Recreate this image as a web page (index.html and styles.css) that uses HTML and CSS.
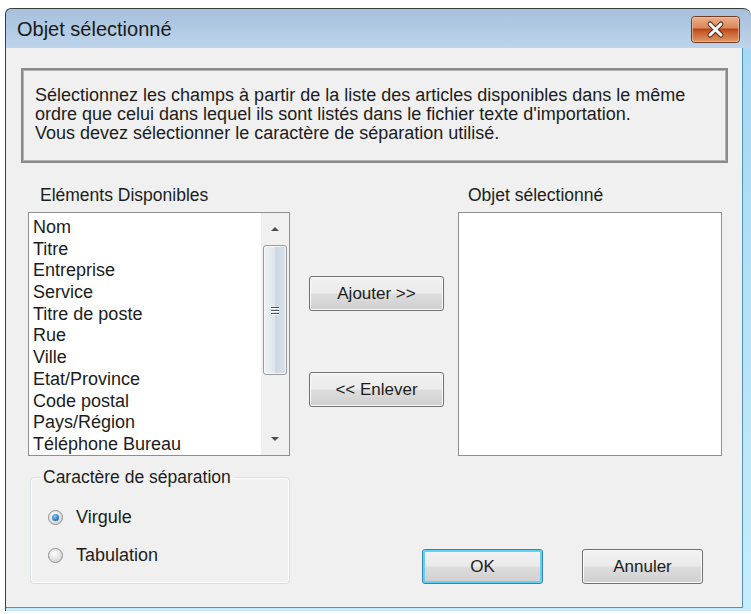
FILE: index.html
```html
<!DOCTYPE html>
<html lang="fr">
<head>
    <meta charset="UTF-8">
    <title>Objet sélectionné</title>
    <link rel="stylesheet" href="styles.css">
</head>
<body>
    <div class="window">
        <div class="titlebar">
            <span class="title">Objet sélectionné</span>
            <button class="close-btn" aria-label="Fermer">
                <svg width="49" height="27" viewBox="0 0 49 27">
                    <defs>
                        <linearGradient id="closeGrad" x1="0" y1="0" x2="0" y2="1">
                            <stop offset="0" stop-color="#eab08e"/>
                            <stop offset="0.42" stop-color="#dc8a5c"/>
                            <stop offset="0.5" stop-color="#b9461c"/>
                            <stop offset="0.62" stop-color="#c9622f"/>
                            <stop offset="1" stop-color="#e09a6a"/>
                        </linearGradient>
                    </defs>
                    <rect x="0.5" y="0.5" width="48" height="26" rx="3" fill="url(#closeGrad)" stroke="#6e3a26"/>
                    <rect x="1.5" y="1.5" width="46" height="24" rx="2" fill="none" stroke="#f4c9ad" stroke-opacity="0.6"/>
                    <path d="M19 8 L30 19 M30 8 L19 19" stroke="#5a2a18" stroke-width="5" stroke-linecap="round"/>
                    <path d="M19 8 L30 19 M30 8 L19 19" stroke="#ffffff" stroke-width="3" stroke-linecap="round"/>
                </svg>
            </button>
        </div>
        <div class="content">
            <div class="info-box">
                <p>Sélectionnez les champs à partir de la liste des articles disponibles dans le même<br>
                ordre que celui dans lequel ils sont listés dans le fichier texte d'importation.<br>
                Vous devez sélectionner le caractère de séparation utilisé.</p>
            </div>

            <div class="lists-row">
                <div class="list-col left-col">
                    <div class="list-label">Eléments Disponibles</div>
                    <div class="listbox">
                        <ul class="items">
                            <li>Nom</li>
                            <li>Titre</li>
                            <li>Entreprise</li>
                            <li>Service</li>
                            <li>Titre de poste</li>
                            <li>Rue</li>
                            <li>Ville</li>
                            <li>Etat/Province</li>
                            <li>Code postal</li>
                            <li>Pays/Région</li>
                            <li>Téléphone Bureau</li>
                        </ul>
                        <div class="scrollbar">
                            <div class="arrow arrow-up"></div>
                            <div class="thumb">
                                <span class="grip"></span>
                                <span class="grip"></span>
                                <span class="grip"></span>
                            </div>
                            <div class="track"></div>
                            <div class="arrow arrow-down"></div>
                        </div>
                    </div>
                </div>

                <div class="move-buttons">
                    <button class="btn move-btn">Ajouter &gt;&gt;</button>
                    <button class="btn move-btn">&lt;&lt; Enlever</button>
                </div>

                <div class="list-col right-col">
                    <div class="list-label">Objet sélectionné</div>
                    <div class="listbox"></div>
                </div>
            </div>

            <div class="bottom-row">
                <fieldset class="group">
                    <legend>Caractère de séparation</legend>
                    <label class="radio-row"><span class="radio checked"></span>Virgule</label>
                    <label class="radio-row"><span class="radio"></span>Tabulation</label>
                </fieldset>
                <div class="dialog-buttons">
                    <button class="btn dialog-btn default">OK</button>
                    <button class="btn dialog-btn">Annuler</button>
                </div>
            </div>
        </div>
    </div>
</body>
</html>
```

FILE: styles.css
```css
body {
    margin: 0;
    background: #ffffff;
    font-family: "Liberation Sans", Arial, sans-serif;
    font-size: 17.5px;
    color: #1c1c1c;
}
.window {
    margin: 8px 0 0 5px;
    width: 746px;
    height: 603px;
    box-sizing: border-box;
    border-top: 1px solid #3e3e3e;
    border-left: 1px solid #3e3e3e;
    border-top-left-radius: 6px;
    border-top-right-radius: 8px;
    background: linear-gradient(#a6c1dd, #bdd4eb 39px, #a6d8f0 40px, #c8ecf9);
    overflow: hidden;
}
.titlebar {
    height: 39px;
    display: flex;
    align-items: center;
    justify-content: space-between;
    padding: 1px 11px 0 11px;
    box-sizing: border-box;
}
.title {
    font-size: 20px;
    line-height: 24px;
    color: #1a1a1a;
}
.close-btn {
    padding: 0;
    border: none;
    background: none;
    width: 49px;
    height: 27px;
    display: block;
}
.close-btn svg {
    display: block;
}
.content {
    width: 737px;
    height: 560px;
    box-sizing: border-box;
    background: #f0f0f0;
    border-right: 1px solid #4f93c4;
    border-bottom: 1px solid #4f93c4;
    padding: 20px 14px 0 15px;
}
.info-box {
    height: 95px;
    box-sizing: border-box;
    border: 2px solid #8a8a8a;
    box-shadow: inset 0 0 0 1px #b4b4b4;
    padding: 16px 10px 0 12px;
    font-size: 18px;
}
.info-box p {
    margin: 0;
    line-height: 19px;
}
.lists-row {
    display: flex;
    margin-top: 22px;
    padding: 0 6px 0 7px;
    gap: 19px;
}
.list-col {
    display: flex;
    flex-direction: column;
}
.left-col {
    width: 262px;
}
.right-col {
    width: 264px;
    margin-left: -5px;
}
.list-label {
    height: 20px;
    line-height: 20px;
    margin-bottom: 7px;
    padding-left: 12px;
}
.right-col .list-label {
    padding-left: 10px;
}
.listbox {
    height: 244px;
    box-sizing: border-box;
    border: 1px solid #8e8f8f;
    background: #ffffff;
    display: flex;
}
.items {
    flex: 1;
    list-style: none;
    margin: 0;
    padding: 4px 0 0 4px;
    font-size: 18px;
}
.items li {
    height: 21.7px;
    line-height: 21.7px;
    white-space: nowrap;
}
.scrollbar {
    width: 28px;
    background: #f0f0f0;
    display: flex;
    flex-direction: column;
    align-items: center;
}
.arrow {
    height: 32px;
    width: 100%;
    position: relative;
}
.arrow::after {
    content: "";
    position: absolute;
    left: 10px;
    border-left: 4px solid transparent;
    border-right: 4px solid transparent;
}
.arrow-up::after {
    top: 14px;
    border-bottom: 4px solid #4d4d4d;
}
.arrow-down::after {
    bottom: 14px;
    border-top: 4px solid #4d4d4d;
}
.thumb {
    width: 24px;
    height: 130px;
    box-sizing: border-box;
    border: 1px solid #9a9a9a;
    border-radius: 3px;
    background: linear-gradient(to right, #eef2f6, #dce4ec 50%, #cfd8e2 51%, #d9e1e9);
    box-shadow: inset 0 0 0 1px #f6f8fa;
    display: flex;
    flex-direction: column;
    align-items: center;
    justify-content: center;
    gap: 2px;
}
.grip {
    width: 8px;
    height: 1px;
    background: #4a5560;
    box-shadow: 0 1px 0 #ffffff;
}
.track {
    flex: 1;
}
.move-buttons {
    width: 135px;
    display: flex;
    flex-direction: column;
    padding-top: 91px;
    gap: 61px;
}
.btn {
    font-family: "Liberation Sans", Arial, sans-serif;
    font-size: 17px;
    color: #1c1c1c;
    height: 35px;
    border: 1px solid #707070;
    border-radius: 3px;
    background: linear-gradient(#f2f2f2 0%, #ebebeb 48%, #dddddd 52%, #cfcfcf 100%);
    box-shadow: inset 0 0 0 1px #fbfbfb;
    padding: 0;
}
.move-btn {
    width: 135px;
}
.bottom-row {
    display: flex;
    align-items: flex-end;
    margin-top: 11px;
}
.group {
    width: 260px;
    box-sizing: border-box;
    margin: 0 0 0 9px;
    padding: 20px 0 18px 0;
    border: 1px solid #d5dfe5;
    border-radius: 4px;
    box-shadow: inset 0 0 0 1px #ffffff;
}
.group legend {
    margin-left: 9px;
    padding: 0 3px;
    height: 20px;
    line-height: 20px;
}
.radio-row {
    display: flex;
    align-items: center;
    height: 20px;
    gap: 13px;
    margin-left: 17px;
    font-size: 18px;
}
.radio-row + .radio-row {
    margin-top: 18px;
}
.radio {
    width: 15px;
    height: 15px;
    box-sizing: border-box;
    border-radius: 50%;
    border: 1px solid #8e8f8f;
    background: radial-gradient(circle at 40% 35%, #ffffff, #d8d8d8 70%, #c4c4c4);
    display: flex;
    align-items: center;
    justify-content: center;
}
.radio.checked::after {
    content: "";
    width: 7px;
    height: 7px;
    border-radius: 50%;
    background: radial-gradient(circle at 40% 35%, #8fd0f5, #2a78c0 60%, #18508a);
}
.dialog-buttons {
    margin-left: auto;
    margin-right: 25px;
    display: flex;
    gap: 39px;
}
.dialog-btn {
    width: 121px;
}
.dialog-btn.default {
    border-color: #3c7fb1;
    box-shadow: inset 0 0 0 2px #62d2f4;
}
```
